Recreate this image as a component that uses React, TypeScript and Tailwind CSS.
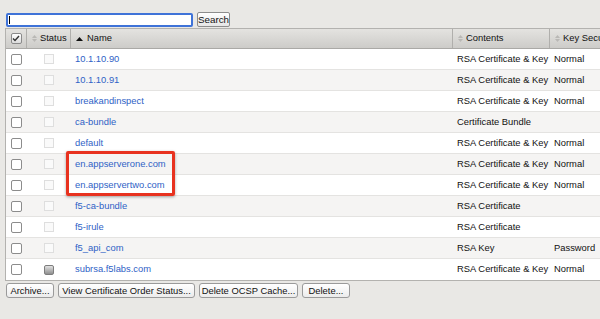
import React from "react";

const rows: { name: string; contents: string; key: string; status?: boolean }[] = [
  { name: "10.1.10.90", contents: "RSA Certificate & Key", key: "Normal" },
  { name: "10.1.10.91", contents: "RSA Certificate & Key", key: "Normal" },
  { name: "breakandinspect", contents: "RSA Certificate & Key", key: "Normal" },
  { name: "ca-bundle", contents: "Certificate Bundle", key: "" },
  { name: "default", contents: "RSA Certificate & Key", key: "Normal" },
  { name: "en.appserverone.com", contents: "RSA Certificate & Key", key: "Normal" },
  { name: "en.appservertwo.com", contents: "RSA Certificate & Key", key: "Normal" },
  { name: "f5-ca-bundle", contents: "RSA Certificate", key: "" },
  { name: "f5-irule", contents: "RSA Certificate", key: "" },
  { name: "f5_api_com", contents: "RSA Key", key: "Password" },
  { name: "subrsa.f5labs.com", contents: "RSA Certificate & Key", key: "Normal", status: true },
];

function SortIcon() {
  return (
    <svg width="5" height="7" viewBox="0 0 5 7" className="mr-[3px] shrink-0">
      <path d="M2.5 0 L5 3 L0 3 Z" fill="#b9b8b5" />
      <path d="M2.5 7 L5 4 L0 4 Z" fill="#b9b8b5" />
    </svg>
  );
}

function Btn({ label, w }: { label: string; w: string }) {
  return (
    <div
      className={`${w} h-[15px] flex items-center justify-center rounded-[3px] border border-[#9a9a9a] bg-gradient-to-b from-white to-[#ececec] text-[9.4px] text-[#111] leading-none whitespace-nowrap`}
    >
      {label}
    </div>
  );
}

export default function App() {
  return (
    <div
      className="relative w-[600px] h-[319px] overflow-hidden bg-[#e9e8e5] text-[#111]"
      style={{ fontFamily: '"Liberation Sans", Arial, sans-serif' }}
    >
      {/* search row */}
      <div className="flex items-center gap-[4px] pl-[6px] pt-[12px]">
        <div className="w-[187px] h-[14px] rounded-[2px] border-2 border-[#3f73d8] bg-white flex items-center pl-[1px]">
          <div className="w-[1px] h-[8px] bg-black" />
        </div>
        <div className="w-[33px] h-[15px] flex items-center justify-center rounded-[2px] border border-[#8d8d8d] bg-gradient-to-b from-white to-[#e6e6e6] text-[9.8px] leading-none">
          Search
        </div>
      </div>

      {/* table */}
      <div className="ml-[5px] mt-[1px] w-[620px] border-l border-b border-t border-[#b3b2af] text-[9.4px]">
        {/* header */}
        <div className="flex h-[20px] bg-gradient-to-b from-[#e4e3e0] to-[#cdccc9] border-b border-[#aaa9a6] items-stretch whitespace-nowrap">
          <div className="w-[21px] shrink-0 flex items-center justify-center border-r border-[#b0afac]">
            <div className="w-[11px] h-[11px] rounded-[2px] border border-[#8a8a8a] bg-gradient-to-b from-white to-[#dcdcdc] flex items-center justify-center">
              <svg width="8" height="7" viewBox="0 0 8 7">
                <path d="M1 3.5 L3 5.5 L7 1" stroke="#333" strokeWidth="1.4" fill="none" />
              </svg>
            </div>
          </div>
          <div className="w-[44px] shrink-0 flex items-center pl-[5px] border-r border-[#b0afac]">
            <SortIcon />
            <span>Status</span>
          </div>
          <div className="w-[382px] shrink-0 flex items-center pl-[5px] border-r border-[#b0afac]">
            <svg width="7" height="4" viewBox="0 0 7 4" className="mr-[4px]">
              <path d="M3.5 0 L7 4 L0 4 Z" fill="#111" />
            </svg>
            <span>Name</span>
          </div>
          <div className="w-[97px] shrink-0 flex items-center pl-[5px] border-r border-[#b0afac]">
            <SortIcon />
            <span>Contents</span>
          </div>
          <div className="flex-1 min-w-0 overflow-hidden flex items-center pl-[5px]">
            <SortIcon />
            <span>Key Secu</span>
          </div>
        </div>

        {rows.map((r, i) => (
          <div
            key={r.name}
            className={`flex h-[21px] items-center border-b border-[#e4e3e1] last:border-b-0 whitespace-nowrap ${
              i % 2 === 0 ? "bg-white" : "bg-[#f5f4f3]"
            }`}
          >
            <div className="w-[21px] shrink-0 flex justify-center">
              <div className="w-[11px] h-[11px] rounded-[2px] border border-[#8c8c8c] bg-white" />
            </div>
            <div className="w-[44px] shrink-0 flex justify-center">
              {r.status ? (
                <div className="w-[10px] h-[10px] rounded-[2px] border border-[#7d7d7d] bg-gradient-to-b from-[#e2e2e2] to-[#8f8f8f]" />
              ) : (
                <div className="w-[10px] h-[10px] border border-[#dedede] bg-[#fafafa]" />
              )}
            </div>
            <div className="w-[382px] shrink-0 pl-[4px] text-[#2f62c6]">{r.name}</div>
            <div className="w-[97px] shrink-0 pl-[4px]">{r.contents}</div>
            <div className="flex-1 min-w-0 pl-[4px]">{r.key}</div>
          </div>
        ))}
      </div>

      {/* buttons */}
      <div className="flex gap-[4px] pl-[6px] pt-[2px]">
        <Btn label="Archive..." w="w-[48px]" />
        <Btn label="View Certificate Order Status..." w="w-[137px]" />
        <Btn label="Delete OCSP Cache..." w="w-[99px]" />
        <Btn label="Delete..." w="w-[48px]" />
      </div>

      {/* red highlight */}
      <div className="absolute left-[66px] top-[151px] w-[109px] h-[45px] rounded-[2px] border-[3px] border-[#e8321f] shadow-[0_1px_3px_rgba(0,0,0,0.35)]" />
    </div>
  );
}
